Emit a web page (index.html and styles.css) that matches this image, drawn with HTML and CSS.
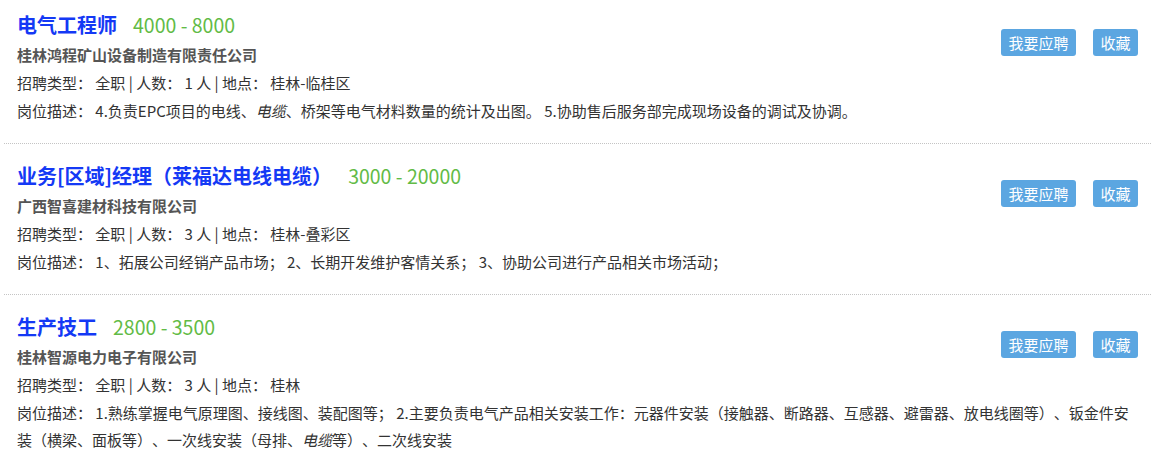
FILE: index.html
```html
<!DOCTYPE html>
<html lang="zh-CN">
<head>
<meta charset="utf-8">
<title>职位列表</title>
<link rel="stylesheet" href="styles.css">
</head>
<body>
<ul class="jobs">
  <li class="job">
    <div class="actions"><a class="btn" href="#">我要应聘</a><a class="btn" href="#">收藏</a></div>
    <h3 class="title"><a href="#">电气工程师</a><span class="salary">4000 - 8000</span></h3>
    <p class="company">桂林鸿程矿山设备制造有限责任公司</p>
    <p class="meta">招聘类型： 全职 | 人数： 1 人 | 地点： 桂林-临桂区</p>
    <p class="meta">岗位描述： 4.负责EPC项目的电线、<i>电缆</i>、桥架等电气材料数量的统计及出图。 5.协助售后服务部完成现场设备的调试及协调。</p>
  </li>
  <li class="job">
    <div class="actions"><a class="btn" href="#">我要应聘</a><a class="btn" href="#">收藏</a></div>
    <h3 class="title"><a href="#">业务[区域]经理（莱福达电线电缆）</a><span class="salary">3000 - 20000</span></h3>
    <p class="company">广西智喜建材科技有限公司</p>
    <p class="meta">招聘类型： 全职 | 人数： 3 人 | 地点： 桂林-叠彩区</p>
    <p class="meta">岗位描述： 1、拓展公司经销产品市场； 2、长期开发维护客情关系； 3、协助公司进行产品相关市场活动；</p>
  </li>
  <li class="job">
    <div class="actions"><a class="btn" href="#">我要应聘</a><a class="btn" href="#">收藏</a></div>
    <h3 class="title"><a href="#">生产技工</a><span class="salary">2800 - 3500</span></h3>
    <p class="company">桂林智源电力电子有限公司</p>
    <p class="meta">招聘类型： 全职 | 人数： 3 人 | 地点： 桂林</p>
    <p class="meta">岗位描述： 1.熟练掌握电气原理图、接线图、装配图等； 2.主要负责电气产品相关安装工作：元器件安装（接触器、断路器、互感器、避雷器、放电线圈等）、钣金件安装（横梁、面板等）、一次线安装（母排、<i>电缆</i>等）、二次线安装</p>
  </li>
</ul>
</body>
</html>
```

FILE: styles.css
```css
html, body {
  margin: 0;
  padding: 0;
  background: #fff;
}

body {
  font-family: "Microsoft YaHei", "Noto Sans CJK SC", sans-serif;
  font-size: 15px;
  color: #333;
  overflow: hidden;
  text-spacing-trim: space-all;
}

.jobs {
  list-style: none;
  margin: 0 2px 0 4px;
  padding: 0;
}

.job {
  padding: 16px 13px 19px 13px;
  border-bottom: 1px dotted #c4c4c4;
}

.job:first-child {
  padding-top: 9px;
}

.job:last-child {
  border-bottom: none;
}

.actions {
  float: right;
  display: flex;
  gap: 17px;
  margin-top: 20px;
}

.btn {
  display: block;
  height: 27px;
  line-height: 27px;
  padding: 0 7.5px;
  font-size: 15px;
  color: #fff;
  background: #5ba6e1;
  border-radius: 3px;
  text-decoration: none;
}

.title {
  margin: 0;
  font-size: 20px;
  font-weight: bold;
  line-height: 32px;
}

.title a {
  color: #1439f5;
  text-decoration: none;
}

.salary {
  margin-left: 16px;
  font-size: 19.5px;
  font-weight: normal;
  color: #62bb46;
}

.company {
  margin: 0;
  font-weight: bold;
  color: #555;
  line-height: 28px;
}

.meta {
  margin: 0;
  line-height: 28px;
}

.meta + .meta {
  line-height: 27px;
}
```
